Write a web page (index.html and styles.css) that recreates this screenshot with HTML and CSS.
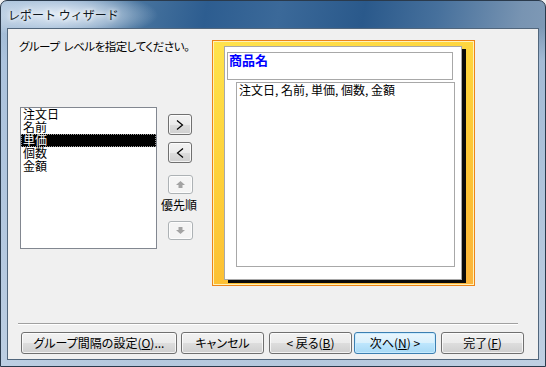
FILE: index.html
```html
<!DOCTYPE html>
<html lang="ja">
<head>
  <meta charset="UTF-8" />
  <title>レポート ウィザード</title>
  <link rel="stylesheet" href="styles.css">
</head>
<body>

  <div class="window">
    <!-- タイトルバー -->
    <div class="titlebar"><span class="title">レポート ウィザード</span></div>

    <div class="client">
      <div class="main">
        <!-- 左側: フィールド一覧と移動ボタン -->
        <div class="left">
          <p class="prompt">グループ  レベルを指定してください。</p>
          <div class="pick">
            <ul class="fields">
              <li>注文日</li>
              <li>名前</li>
              <li class="sel">単価</li>
              <li>個数</li>
              <li>金額</li>
            </ul>
            <div class="movers">
              <button class="btn mv">
                <svg width="8" height="10" viewBox="0 0 8 10"><polyline points="1,0.5 6.5,5 1,9.5" fill="none" stroke="#000" stroke-width="1.2"/></svg>
              </button>
              <button class="btn mv mv-back">
                <svg width="8" height="10" viewBox="0 0 8 10"><polyline points="7,0.5 1.5,5 7,9.5" fill="none" stroke="#000" stroke-width="1.2"/></svg>
              </button>
              <button class="btn prio" disabled>
                <svg width="9" height="7" viewBox="0 0 9 7"><polygon points="4.5,0 9,4 6.5,4 6.5,7 2.5,7 2.5,4 0,4" fill="#a3a3a3"/></svg>
              </button>
              <span class="prio-label">優先順</span>
              <button class="btn prio prio-down" disabled>
                <svg width="9" height="7" viewBox="0 0 9 7"><polygon points="4.5,7 9,3 6.5,3 6.5,0 2.5,0 2.5,3 0,3" fill="#a3a3a3"/></svg>
              </button>
            </div>
          </div>
        </div>

        <!-- 右側: プレビュー -->
        <div class="preview">
          <div class="page">
            <div class="grp-head">商品名</div>
            <div class="detail">注文日, 名前, 単価, 個数, 金額</div>
          </div>
        </div>
      </div>

      <div class="sep"></div>

      <!-- 下部ボタン -->
      <div class="actions">
        <button class="btn act act-wide">グループ間隔の設定(<u>O</u>)...</button>
        <button class="btn act act-cancel">キャンセル</button>
        <button class="btn act act-back">&lt; 戻る(<u>B</u>)</button>
        <button class="btn act act-next default">次へ(<u>N</u>) &gt;</button>
        <button class="btn act act-done">完了(<u>F</u>)</button>
      </div>
    </div>
  </div>

</body>
</html>
```

FILE: styles.css
```css
/* 基本 */
* {
  box-sizing: border-box;
}
html, body {
  margin: 0;
  padding: 0;
}
body {
  width: 546px;
  height: 367px;
  overflow: hidden;
  font-family: "Noto Sans CJK JP", "Noto Sans", sans-serif;
  font-size: 12px;
  color: #000;
  background: #f0f0f0;
}

/* ウィンドウ枠 (Aero 風) */
.window {
  width: 546px;
  height: 367px;
  border: 1px solid #2a3a4c;
  border-radius: 7px 7px 0 0;
  padding: 0 6px 6px 6px;
  display: flex;
  flex-direction: column;
  background:
    radial-gradient(ellipse 95px 24px at 62px 14px, rgba(235, 242, 250, 0.95), rgba(220, 232, 244, 0.55) 55%, rgba(200, 220, 240, 0) 100%),
    linear-gradient(to bottom, rgba(180, 202, 226, 0) 26px, rgba(176, 198, 224, 0.75) 60px, rgba(196, 212, 230, 0.9) 100%),
    linear-gradient(100deg, #a9c1d9 0%, #7c9ec3 10%, #49759f 22%, #2d5d90 34%, #3b6999 46%, #2a598b 60%, #46709c 72%, #7894b2 86%, #8ca4be 100%);
}

.titlebar {
  height: 27px;
  padding: 5px 0 0 1px;
}
.title {
  font-size: 12px;
  line-height: 14px;
  color: #101820;
  text-shadow: 0 0 4px #fff, 0 0 6px #fff;
}

/* クライアント領域 */
.client {
  height: 332px;
  border: 1px solid #51667c;
  background: #f0f0f0;
  display: flex;
  flex-direction: column;
}

.main {
  display: flex;
  height: 294px;
  padding: 10px 0 0 11px;
}

.left {
  width: 193px;
}

.prompt {
  margin: 0;
  font-size: 11.5px;
  line-height: 14px;
  letter-spacing: -0.5px;
  font-feature-settings: "palt";
  white-space: pre;
}

.pick {
  display: flex;
  margin-top: 54px;
}

/* フィールド一覧 */
.fields {
  list-style: none;
  margin: 0 0 0 1px;
  padding: 0;
  width: 137px;
  height: 142px;
  border: 1px solid #828790;
  background: #fff;
}
.fields li {
  height: 13px;
  line-height: 12px;
  padding-left: 2px;
  white-space: nowrap;
}
.fields li.sel {
  background: #000;
  color: #fff;
  outline: 1px dotted #9a9a9a;
  outline-offset: -1px;
}

/* 移動ボタン */
.movers {
  width: 38px;
  margin-left: 3px;
  padding-top: 7px;
  display: flex;
  flex-direction: column;
  align-items: center;
}

.btn {
  font-family: inherit;
  font-size: 12px;
  color: #000;
  padding: 0;
  border: 1px solid #707070;
  border-radius: 3px;
  background: linear-gradient(to bottom, #f2f2f2 0%, #ebebeb 50%, #dddddd 51%, #cfcfcf 100%);
  box-shadow: inset 0 0 0 1px rgba(255, 255, 255, 0.75);
  display: flex;
  align-items: center;
  justify-content: center;
}

.mv {
  width: 24px;
  height: 21px;
  margin-left: 2px;
}
.mv-back {
  margin-top: 7px;
}

.prio {
  width: 25px;
  height: 19px;
  margin-top: 12px;
  margin-left: 2px;
  border-color: #adb2b5;
  background: #f4f4f4;
  box-shadow: inset 0 0 0 1px #fcfcfc;
}
.prio-down {
  margin-top: 9px;
}
.prio-label {
  margin-top: 4px;
  line-height: 14px;
  white-space: nowrap;
}

/* プレビュー */
.preview {
  width: 263px;
  height: 246px;
  margin-top: 1px;
  border: 1px solid #ee8418;
  box-shadow: inset 0 0 0 1px #fff2b8;
  background: linear-gradient(160deg, #ffe34c 0%, #fed13a 40%, #fcbf34 75%, #fbb43c 100%);
  padding: 5px 0 0 11px;
}

.page {
  width: 238px;
  height: 234px;
  background: #fff;
  border: 1px solid #a8a8a8;
  box-shadow: 4px 3px 0 #0a0a0a;
  padding: 5px 0 0 2px;
}

.grp-head {
  width: 226px;
  height: 28px;
  border: 1px solid #a8a8a8;
  color: #0000ff;
  font-size: 13px;
  font-weight: bold;
  line-height: 14px;
  padding: 0 0 0 1px;
}

.detail {
  width: 219px;
  height: 185px;
  margin: 2px 0 0 9px;
  border: 1px solid #a8a8a8;
  line-height: 13px;
  padding: 0 0 0 2px;
  font-feature-settings: "palt";
}

/* 区切り線 */
.sep {
  width: 500px;
  height: 2px;
  margin-left: 10px;
  border-top: 1px solid #a0a0a0;
  border-bottom: 1px solid #fff;
}

/* 下部ボタン */
.actions {
  display: flex;
  margin-top: 7px;
  padding-left: 13px;
}
.act {
  height: 22px;
  line-height: 14px;
  font-feature-settings: "palt";
}
.act u {
  text-underline-offset: 1px;
}
.act-wide {
  width: 156px;
}
.act-cancel {
  width: 83px;
  margin-left: 4px;
}
.act-back {
  width: 83px;
  margin-left: 5px;
}
.act-next {
  width: 82px;
  margin-left: 2px;
}
.act-done {
  width: 83px;
  margin-left: 5px;
}

.default {
  border-color: #3c7fb1;
  background: linear-gradient(to bottom, #eaf6fd 0%, #d9f0fc 50%, #bee6fd 51%, #a7d9f5 100%);
  box-shadow: inset 0 0 0 1px rgba(200, 235, 255, 0.9);
}
```
